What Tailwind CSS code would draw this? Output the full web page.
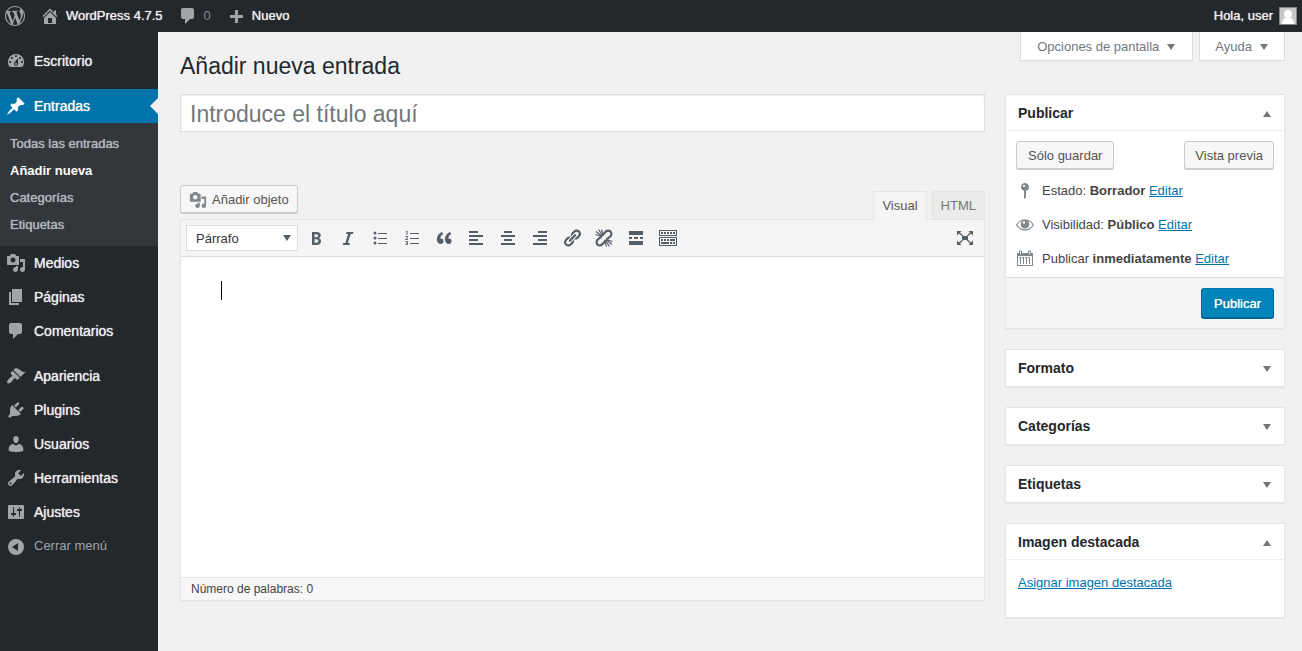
<!DOCTYPE html>
<html lang="es">
<head>
<meta charset="utf-8">
<meta name="viewport" content="width=device-width, initial-scale=1">
<title>Añadir nueva entrada</title>
<script src="https://cdn.jsdelivr.net/npm/@tailwindcss/browser@4"></script>
</head>
<body class="flex min-h-screen flex-col bg-[#f1f1f1] font-['Liberation_Sans',Arial,sans-serif] text-[13px] leading-5 text-[#444]">

<svg class="hidden" aria-hidden="true">
  <symbol id="media" viewBox="0 0 20 20"><path d="M13 11V4c0-.55-.45-1-1-1h-1.670L9 1H5L3.670 3H2c-.55 0-1 .45-1 1v7c0 .55.45 1 1 1h10c.55 0 1-.45 1-1zM7 4.500c1.380 0 2.500 1.120 2.500 2.500S8.380 9.500 7 9.500 4.500 8.380 4.500 7 5.620 4.500 7 4.500zM14 6h5v10.500c0 1.380-1.120 2.500-2.500 2.500S14 17.880 14 16.500s1.120-2.500 2.500-2.500c.17 0 .34.02.5.05V9h-3V6zm-4 8.050V13h2v3.500c0 1.380-1.120 2.500-2.500 2.500S7 17.880 7 16.500 8.120 14 9.500 14c.17 0 .34.02.5.05z"/></symbol>
  <symbol id="comment" viewBox="0 0 20 20"><path d="M5 2h9c1.100 0 2 .9 2 2v7c0 1.100-.9 2-2 2h-2l-5 5v-5H5c-1.100 0-2-.9-2-2V4c0-1.100.9-2 2-2z"/></symbol>
  <symbol id="down" viewBox="0 0 10 10"><path d="M1 2h8L5 8z"/></symbol>
  <symbol id="down-low" viewBox="0 0 10 10"><path d="M1 3h8L5 9z"/></symbol>
  <symbol id="up" viewBox="0 0 10 10"><path d="M1 9h8L5 3z"/></symbol>
</svg>

<header class="flex h-8 items-center justify-between bg-[#23282d] pr-[5px] pl-[5px] text-[#eee] [text-shadow:0_0_1px_#eee]">
  <nav class="flex items-center" aria-label="Barra de herramientas">
    <a href="#" aria-label="Acerca de WordPress" class="mr-[15px] text-[#a0a5aa]">
      <svg class="size-5 fill-current" viewBox="0 0 20 20"><path d="M20 10c0-5.510-4.490-10-10-10C4.480 0 0 4.490 0 10c0 5.520 4.480 10 10 10 5.510 0 10-4.480 10-10zM7.780 15.370L4.370 6.220c.55-.02 1.170-.08 1.170-.08.5-.06.44-1.130-.06-1.110 0 0-1.450.11-2.370.11-.18 0-.37 0-.58-.01C4.120 2.690 6.870 1.110 10 1.110c2.330 0 4.450.87 6.050 2.340-.68-.11-1.650.39-1.650 1.580 0 .74.45 1.360.9 2.100.35.61.55 1.360.55 2.460 0 1.490-1.400 5-1.400 5l-3.030-8.370c.54-.02.82-.17.82-.17.5-.05.44-1.250-.06-1.220 0 0-1.440.12-2.380.12-.87 0-2.330-.12-2.330-.12-.5-.03-.56 1.200-.06 1.220l.92.08 1.260 3.410zM17.410 10c.24-.64.74-1.870.43-4.250.7 1.290 1.050 2.710 1.050 4.250 0 3.290-1.730 6.240-4.400 7.780.97-2.590 1.940-5.200 2.920-7.780zM6.100 18.090C3.120 16.650 1.110 13.530 1.110 10c0-1.300.23-2.480.72-3.590C3.250 10.300 4.670 14.200 6.100 18.090zm4.030-6.630l2.580 6.980c-.86.29-1.760.45-2.710.45-.79 0-1.570-.11-2.290-.33.81-2.380 1.620-4.740 2.420-7.100z"/></svg>
    </a>
    <a href="#" class="mr-[15px] flex items-center gap-[6px]">
      <svg class="size-5 fill-[#a0a5aa]" viewBox="0 0 20 20"><path d="M16 8.500l1.530 1.530-1.060 1.060L10 4.600l-6.470 6.490-1.060-1.060L10 2.500l4 4v-2h2v4zm-6-2.460l6 5.990V18H4v-5.970zM12 17v-5H8v5h4z"/></svg>
      WordPress 4.7.5
    </a>
    <a href="#" class="mr-[15px] flex items-center gap-[6px] text-[#a0a5aa]/80 [text-shadow:none]" aria-label="0 comentarios">
      <svg class="size-5 fill-[#a0a5aa]"><use href="#comment"/></svg>
      0
    </a>
    <a href="#" class="flex items-center gap-[6px]">
      <svg class="size-5 fill-[#a0a5aa]" viewBox="0 0 20 20"><path d="M17 9v3h-5v5H9v-5H4V9h5V4h3v5z"/></svg>
      Nuevo
    </a>
  </nav>
  <a href="#" class="flex items-center gap-[6px]">
    Hola, user
    <svg class="size-[18px]" viewBox="0 0 18 18"><path fill="#82878c" d="M0 0h18v18H0z"/><path fill="#c8c8c8" d="M1 1h16v16H1z"/><circle cx="9" cy="7" r="4" fill="#fff"/><path fill="#fff" d="M3 17c0-4 2-6 4-6h4c2 0 4 2 4 6z"/></svg>
  </a>
</header>

<div class="flex flex-1">
  <nav class="w-[158px] shrink-0 bg-[#23282d] pt-3 text-sm text-[#eee] [text-shadow:0_0_1px_#eee]" aria-label="Menú principal">
    <ul>
      <li><a href="#" class="flex h-[34px] items-center gap-2 pl-[6px]"><svg class="size-5 fill-[#a0a5aa]" viewBox="0 0 20 20"><path d="M3.760 16h12.480A7.998 7.998 0 0 0 10 3a7.998 7.998 0 0 0-6.240 13zM10 4c.55 0 1 .45 1 1s-.45 1-1 1-1-.45-1-1 .45-1 1-1zM6 6c.55 0 1 .45 1 1s-.45 1-1 1-1-.45-1-1 .45-1 1-1zm8 0c.55 0 1 .45 1 1s-.45 1-1 1-1-.45-1-1 .45-1 1-1zm-5.370 5.550L12 7v6c0 1.100-.9 2-2 2s-2-.9-2-2c0-.57.24-1.080.63-1.450zM4 10c.55 0 1 .45 1 1s-.45 1-1 1-1-.45-1-1 .45-1 1-1zm12 0c.55 0 1 .45 1 1s-.45 1-1 1-1-.45-1-1 .45-1 1-1zm-5 3c0-.55-.45-1-1-1s-1 .45-1 1 .45 1 1 1 1-.45 1-1z"/></svg>Escritorio</a></li>
      <li class="mt-[11px]">
        <a href="#" aria-current="true" class="flex h-[34px] items-center gap-2 bg-[#0073aa] pl-[6px] text-white"><svg class="size-5 fill-white" viewBox="0 0 20 20"><path d="M10.440 3.020l1.820-1.820 6.360 6.350-1.830 1.820c-1.050-.68-2.480-.57-3.410.36l-.75.75c-.92.93-1.040 2.350-.35 3.410l-1.830 1.820-2.410-2.410-2.800 2.790c-.42.42-3.380 2.710-3.800 2.290s1.860-3.390 2.280-3.810l2.790-2.790L4.100 9.360l1.830-1.820c1.050.69 2.480.57 3.400-.36l.75-.75c.93-.92 1.050-2.350.36-3.410z"/></svg>Entradas<svg class="ml-auto h-4 w-2 fill-[#f1f1f1]" viewBox="0 0 8 16"><path d="M8 0v16L0 8z"/></svg></a>
        <ul class="bg-[#32373c] pt-2 pb-[7px] text-[13px] text-[#b4b9be] [text-shadow:0_0_1px_#b4b9be]">
          <li><a href="#" class="flex h-[27px] items-center px-[10px]">Todas las entradas</a></li>
          <li><a href="#" class="flex h-[27px] items-center px-[10px] font-bold text-white [text-shadow:none]" aria-current="page">Añadir nueva</a></li>
          <li><a href="#" class="flex h-[27px] items-center px-[10px]">Categorías</a></li>
          <li><a href="#" class="flex h-[27px] items-center px-[10px]">Etiquetas</a></li>
        </ul>
      </li>
      <li><a href="#" class="flex h-[34px] items-center gap-2 pl-[6px]"><svg class="size-5 fill-[#a0a5aa]"><use href="#media"/></svg>Medios</a></li>
      <li><a href="#" class="flex h-[34px] items-center gap-2 pl-[6px]"><svg class="size-5 fill-[#a0a5aa]" viewBox="0 0 20 20"><path d="M6 15V2h10v13H6zm-1 1h8v2H3V5h2v11z"/></svg>Páginas</a></li>
      <li><a href="#" class="flex h-[34px] items-center gap-2 pl-[6px]"><svg class="size-5 fill-[#a0a5aa]"><use href="#comment"/></svg>Comentarios</a></li>
      <li class="mt-[11px]"><a href="#" class="flex h-[34px] items-center gap-2 pl-[6px]"><svg class="size-5 fill-[#a0a5aa]" viewBox="0 0 20 20"><path d="M14.480 11.060L7.410 3.990l1.500-1.500c.5-.56 2.300-.47 3.510.32 1.210.8 1.430 1.280 2.910 2.100 1.180.64 2.450 1.260 4.450.85zm-.71.71L6.700 4.700 4.930 6.470c-.39.39-.39 1.020 0 1.410l1.060 1.060c.39.39.39 1.030 0 1.420-.6.6-1.430 1.110-2.210 1.690-.35.26-.7.53-1.010.84C1.430 14.230.4 16.080 1.400 17.070c.99 1 2.840-.03 4.180-1.360.31-.31.58-.66.85-1.020.57-.78 1.080-1.610 1.690-2.210.39-.39 1.020-.39 1.410 0l1.060 1.060c.39.39 1.020.39 1.410 0z"/></svg>Apariencia</a></li>
      <li><a href="#" class="flex h-[34px] items-center gap-2 pl-[6px]"><svg class="size-5 fill-[#a0a5aa]" viewBox="0 0 20 20"><path d="M13.110 4.360L9.870 7.600 8 5.730l3.240-3.240c.35-.34 1.050-.2 1.560.32.52.51.66 1.210.31 1.550zm-8 1.770l.91-1.120 9.010 9.010-1.190.84c-.71.71-2.630 1.160-3.820 1.160H6.140L4.900 17.260c-.59.59-1.540.59-2.120 0-.59-.58-.59-1.530 0-2.120l1.240-1.240v-3.880c0-1.130.4-3.190 1.090-3.890zm7.260 3.970l3.240-3.240c.34-.35 1.040-.21 1.550.31.52.51.66 1.210.31 1.550l-3.240 3.250z"/></svg>Plugins</a></li>
      <li><a href="#" class="flex h-[34px] items-center gap-2 pl-[6px]"><svg class="size-5 fill-[#a0a5aa]" viewBox="0 0 20 20"><path d="M10 9.250c-2.270 0-2.730-3.440-2.730-3.440C7 4.020 7.820 2 9.970 2c2.160 0 2.980 2.020 2.710 3.810 0 0-.41 3.440-2.680 3.440zm0 2.570L12.720 10c2.390 0 4.520 2.330 4.520 4.530v2.490s-3.650 1.130-7.240 1.130c-3.650 0-7.240-1.130-7.240-1.130v-2.490c0-2.250 1.940-4.480 4.470-4.480z"/></svg>Usuarios</a></li>
      <li><a href="#" class="flex h-[34px] items-center gap-2 pl-[6px]"><svg class="size-5 fill-[#a0a5aa]" viewBox="0 0 20 20"><path d="M16.680 9.770c-1.340 1.340-3.300 1.670-4.950.99l-5.410 6.520c-.99.99-2.590.99-3.580 0s-.99-2.590 0-3.570l6.520-5.420c-.68-1.650-.35-3.610.99-4.950 1.280-1.280 3.120-1.620 4.720-1.060l-2.890 2.890 2.820 2.820 2.860-2.870c.53 1.580.18 3.390-1.080 4.650zM3.810 16.210c.4.39 1.040.39 1.430 0 .4-.4.4-1.040 0-1.430-.39-.4-1.030-.4-1.430 0-.39.39-.39 1.030 0 1.430z"/></svg>Herramientas</a></li>
      <li><a href="#" class="flex h-[34px] items-center gap-2 pl-[6px]"><svg class="size-5 fill-[#a0a5aa]" viewBox="0 0 20 20"><path d="M18 16V4c0-.55-.45-1-1-1H3c-.55 0-1 .45-1 1v12c0 .55.45 1 1 1h14c.55 0 1-.45 1-1zM8 11h1c.55 0 1 .45 1 1s-.45 1-1 1H8v1.500c0 .28-.22.5-.5.5s-.5-.22-.5-.5V13H6c-.55 0-1-.45-1-1s.45-1 1-1h1V5.500c0-.28.22-.5.5-.5s.5.22.5.5V11zm5-2h-1c-.55 0-1-.45-1-1s.45-1 1-1h1V5.500c0-.28.22-.5.5-.5s.5.22.5.5V7h1c.55 0 1 .45 1 1s-.45 1-1 1h-1v5.500c0 .28-.22.5-.5.5s-.5-.22-.5-.5V9z"/></svg>Ajustes</a></li>
      <li><button type="button" class="flex h-[35px] w-full items-center gap-2 pl-[6px] text-[13px] text-[#a0a5aa] [text-shadow:none]"><svg class="size-5 fill-current" viewBox="0 0 20 20"><path fill-rule="evenodd" d="M10 2a8 8 0 1 1 0 16 8 8 0 0 1 0-16zm2 4l-6 4 6 4z"/></svg>Cerrar menú</button></li>
    </ul>
  </nav>

  <main class="min-w-0 flex-1 pr-[17px] pl-[22px]">
    <div class="flex h-[62px] items-start justify-between">
      <h1 class="pt-5 text-[23px] leading-7 text-[#23282d]">Añadir nueva entrada</h1>
      <div class="flex gap-[6px] text-[#72777c]">
        <button type="button" class="flex h-[29px] items-center gap-[7px] border border-t-0 border-[#ddd] bg-white px-4 pt-px shadow-[0_1px_1px_-1px_rgba(0,0,0,0.1)]">Opciones de pantalla<svg class="size-[10px] fill-current"><use href="#down"/></svg></button>
        <button type="button" class="flex h-[29px] items-center gap-[7px] border border-t-0 border-[#ddd] bg-white px-[15px] pt-px shadow-[0_1px_1px_-1px_rgba(0,0,0,0.1)]">Ayuda<svg class="size-[10px] fill-current"><use href="#down"/></svg></button>
      </div>
    </div>

    <div class="flex items-start gap-5">
      <section class="min-w-0 flex-1" aria-label="Editor">
        <input type="text" aria-label="Título" placeholder="Introduce el título aquí" class="block h-[38px] w-full border border-[#ddd] bg-white px-[9px] pt-[2px] text-[23px] shadow-[inset_0_1px_2px_rgba(0,0,0,0.07)] placeholder:text-[#72777c]">

        <div class="mt-[53px] flex h-[34px] items-start justify-between">
          <button type="button" class="flex h-7 items-center gap-[5px] rounded-[3px] border border-[#ccc] bg-[#f7f7f7] px-2 pt-px text-[#555] shadow-[0_1px_0_#ccc]"><svg class="size-[18px] fill-[#82878c]"><use href="#media"/></svg>Añadir objeto</button>
          <div class="relative flex items-start gap-[5px] self-end" role="tablist">
            <button type="button" role="tab" aria-selected="true" class="-mb-px h-[29px] border border-b-0 border-[#e5e5e5] bg-[#f5f5f5] px-2 text-[#555]">Visual</button>
            <button type="button" role="tab" aria-selected="false" class="h-7 border border-b-0 border-[#e5e5e5] bg-[#ebebeb] px-2 text-[#72777c]">HTML</button>
          </div>
        </div>

        <div class="border border-[#e5e5e5] bg-white shadow-[0_1px_1px_rgba(0,0,0,0.04)]">
          <div class="flex h-[37px] items-center justify-between border-b border-[#ddd] bg-[#f5f5f5] px-[5px] text-[#555d66]" role="toolbar">
            <div class="flex items-center">
              <label class="relative mr-[2px] block">
                <select aria-label="Formato de párrafo" class="h-[26px] w-28 appearance-none border border-[#ddd] bg-white pt-px pl-[9px] text-[13px] text-[#32373c]"><option>Párrafo</option><option>Título 1</option><option>Título 2</option></select>
                <svg class="pointer-events-none absolute top-2 right-[6px] size-[10px] fill-[#555d66]"><use href="#down"/></svg>
              </label>
              <button type="button" aria-label="Negrita" class="flex w-8 justify-center"><svg class="size-5 fill-current" viewBox="0 0 20 20"><path d="M6 4v13h4.540c1.370 0 2.460-.33 3.260-1 .8-.66 1.200-1.580 1.200-2.770 0-.84-.17-1.510-.51-2.010s-.9-.85-1.670-1.030v-.09c.57-.1 1.020-.4 1.360-.9s.51-1.130.51-1.910c0-1.140-.39-1.980-1.170-2.500C12.750 4.260 11.500 4 9.780 4H6zm2.570 5.150V6.260h1.360c.73 0 1.270.11 1.610.32.34.22.51.58.51 1.070 0 .54-.16.92-.47 1.150s-.82.35-1.510.35h-1.500zm0 2.190h1.600c1.440 0 2.160.53 2.160 1.610 0 .6-.17 1.050-.51 1.340s-.86.43-1.570.43H8.570v-3.380z"/></svg></button>
              <button type="button" aria-label="Cursiva" class="flex w-8 justify-center"><svg class="size-5 fill-current" viewBox="0 0 20 20"><path d="M14.780 6h-2.130l-2.800 9h2.120l-.62 2H4.600l.62-2h2.140l2.800-9H8.030l.62-2h6.750z"/></svg></button>
              <button type="button" aria-label="Lista" class="flex w-8 justify-center"><svg class="size-5 fill-current" viewBox="0 0 20 20"><circle cx="5" cy="5" r="1.500"/><circle cx="5" cy="10" r="1.500"/><circle cx="5" cy="15" r="1.500"/><path d="M8 5h9v1H8zM8 10h9v1H8zM8 15h9v1H8z"/></svg></button>
              <button type="button" aria-label="Lista numerada" class="flex w-8 justify-center"><svg class="size-5 fill-current" viewBox="0 0 20 20"><path d="M8 5h9v1H8zM8 10h9v1H8zM8 15h9v1H8z"/><path fill="none" stroke="currentColor" stroke-width=".9" d="M4 4l1-1v4M3.500 8.500h2v1.500l-2 1.500h2.500M3.500 13.500H5.500v3H3.500M4 15h1.500"/></svg></button>
              <button type="button" aria-label="Cita" class="flex w-8 justify-center"><svg class="size-5 fill-current" viewBox="0 0 20 20"><path d="M9.490 13.220c0-.74-.2-1.380-.61-1.900-.62-.78-1.830-.88-2.530-.72-.29-1.650 1.110-3.750 2.920-4.650L7.880 4c-2.730 1.300-5.420 4.280-4.960 8.050C3.210 14.430 4.590 16 6.540 16c.85 0 1.560-.25 2.120-.75s.83-1.180.83-2.030zm8.050 0c0-.74-.2-1.380-.61-1.900-.63-.78-1.830-.88-2.530-.72-.29-1.650 1.110-3.750 2.920-4.650L15.930 4c-2.730 1.300-5.410 4.280-4.950 8.050.29 2.380 1.660 3.950 3.610 3.950.85 0 1.560-.25 2.120-.75s.83-1.180.83-2.030z"/></svg></button>
              <button type="button" aria-label="Alinear a la izquierda" class="flex w-8 justify-center"><svg class="size-5 fill-current" viewBox="0 0 20 20"><path d="M3 3h9v2H3zM3 7h14v2H3zM3 11h9v2H3zM3 15h14v2H3z"/></svg></button>
              <button type="button" aria-label="Centrar" class="flex w-8 justify-center"><svg class="size-5 fill-current" viewBox="0 0 20 20"><path d="M6 3h8v2H6zM3 7h14v2H3zM6 11h8v2H6zM3 15h14v2H3z"/></svg></button>
              <button type="button" aria-label="Alinear a la derecha" class="flex w-8 justify-center"><svg class="size-5 fill-current" viewBox="0 0 20 20"><path d="M8 3h9v2H8zM3 7h14v2H3zM8 11h9v2H8zM3 15h14v2H3z"/></svg></button>
              <button type="button" aria-label="Insertar enlace" class="flex w-8 justify-center"><svg class="size-5 fill-current" viewBox="0 0 20 20"><path d="M17.740 2.760c1.680 1.690 1.680 4.410 0 6.100l-1.530 1.520c-1.120 1.120-2.700 1.470-4.140 1.090l2.620-2.610.76-.77.76-.76c.84-.84.84-2.200 0-3.040-.84-.85-2.200-.85-3.040 0l-.77.76-3.380 3.380c-.37-1.440-.02-3.020 1.100-4.140l1.520-1.530c1.690-1.680 4.420-1.680 6.100 0zM8.590 13.430l5.340-5.340c.42-.42.42-1.100 0-1.520-.44-.43-1.130-.39-1.530 0l-5.330 5.340c-.42.42-.42 1.100 0 1.520.44.43 1.130.39 1.520 0zm-.76 2.290l4.140-4.150c.38 1.440.03 3.020-1.090 4.140l-1.520 1.530c-1.690 1.680-4.410 1.680-6.100 0-1.680-1.680-1.680-4.420 0-6.100l1.530-1.520c1.120-1.120 2.700-1.470 4.140-1.100l-4.140 4.150c-.85.84-.85 2.200 0 3.050.84.84 2.200.84 3.040 0z"/></svg></button>
              <button type="button" aria-label="Quitar enlace" class="flex w-8 justify-center"><svg class="size-5" viewBox="0 0 20 20" fill="none" stroke="currentColor"><path stroke-width="2.200" d="M9 7.500c.1-1 .6-1.700 1.200-2.300l1.600-1.600c1.300-1.300 3.500-1.300 4.700-.1s1.200 3.400-.1 4.700l-1.600 1.600c-.7.7-1.600 1-2.600 1M11 12.500c-.1 1-.6 1.700-1.200 2.300l-1.600 1.600c-1.300 1.300-3.500 1.300-4.700.1s-1.200-3.400.1-4.700l1.600-1.600c.7-.7 1.600-1 2.600-1"/><path stroke-width="1.200" d="M1.500 6.500L8 8.500M2 3.500l6.500 5M4.500 1.500L9 8M7.500 1.500l2 6M18.500 13.500L12 11.500M18 16.500l-6.500-5M15.500 18.500L11 12M12.500 18.500l-2-6"/></svg></button>
              <button type="button" aria-label="Insertar etiqueta Leer más" class="flex w-8 justify-center"><svg class="size-5 fill-current" viewBox="0 0 20 20"><path d="M3 3h14v4H3zM3 9h3v2H3zM8 9h4v2H8zM14 9h3v2h-3zM3 13h14v4H3z"/></svg></button>
              <button type="button" aria-label="Mostrar más botones" class="flex w-8 justify-center"><svg class="size-5 fill-current" viewBox="0 0 20 20"><path fill-rule="evenodd" d="M1 2h18v6H1zm1 1v4h16V3zM1 9h18v9H1zm1 1v7h16v-7z"/><path d="M3 4h2v2H3zM6 4h2v2H6zM9 4h2v2H9zM12 4h2v2h-2zM15 4h2v2h-2zM3 11h2v2H3zM6 11h2v2H6zM9 11h2v2H9zM12 11h5v2h-5zM3 14h8v2H3zM12 14h2v2h-2zM15 14h2v2h-2z"/></svg></button>
            </div>
            <button type="button" aria-label="Modo sin distracciones" class="mr-1 flex h-5 w-5"><svg class="size-5 fill-current" viewBox="0 0 20 20"><path d="M7 8h6v4H7zM2 3h4.500L5 4.500l3.300 3.200-.9.9L4 5.500 2 7.500zM18 3h-4.500L15 4.500l-3.300 3.200.9.9L16 5.500l2 2zM2 17h4.500L5 15.500l3.300-3.200-.9-.9L4 14.500l-2-2zM18 17h-4.500l1.500-1.500-3.300-3.200.9-.9 3.400 3.100 2-2z"/></svg></button>
          </div>
          <div role="textbox" aria-multiline="true" aria-label="Contenido" contenteditable="true" class="min-h-80 px-10 pt-6 outline-none"><span class="block h-[19px] w-px bg-black"></span></div>
          <div class="border-t border-[#e5e5e5] bg-[#f7f7f7] px-[10px] pt-px pb-px text-xs leading-5">Número de palabras: 0</div>
        </div>
      </section>

      <aside class="flex w-[280px] shrink-0 flex-col gap-5" aria-label="Opciones de la entrada">
        <section class="border border-[#e5e5e5] bg-white shadow-[0_1px_1px_rgba(0,0,0,0.04)]">
          <div class="flex h-9 items-center justify-between border-b border-[#eee] px-3">
            <h2 class="text-sm font-bold text-[#23282d]">Publicar</h2>
            <button type="button" aria-label="Plegar Publicar"><svg class="size-[10px] fill-[#72777c]"><use href="#up"/></svg></button>
          </div>
          <div class="flex justify-between px-[10px] pt-[10px]">
            <button type="button" class="h-7 rounded-[3px] border border-[#ccc] bg-[#f7f7f7] px-[11px] pt-px text-[#555] shadow-[0_1px_0_#ccc]">Sólo guardar</button>
            <button type="button" class="h-7 rounded-[3px] border border-[#ccc] bg-[#f7f7f7] px-[10px] pt-px text-[#555] shadow-[0_1px_0_#ccc]">Vista previa</button>
          </div>
          <ul class="px-[9px] pt-[5px] pb-[1px]">
            <li class="flex h-[34px] items-center gap-[7px]"><svg class="size-5 fill-[#82878c]" viewBox="0 0 20 20"><path d="M14 6c0 1.860-1.280 3.410-3 3.860V16c0 1-2 2-2 2V9.860c-1.720-.45-3-2-3-3.860 0-2.210 1.790-4 4-4s4 1.790 4 4zM8 5c0 .55.45 1 1 1s1-.45 1-1-.45-1-1-1-1 .45-1 1z"/></svg><p>Estado: <b>Borrador</b> <a href="#" class="text-[#0073aa] underline">Editar</a></p></li>
            <li class="flex h-[34px] items-center gap-[7px]"><svg class="size-5 fill-[#82878c]" viewBox="0 0 20 20"><path fill-rule="evenodd" d="M10 4.500c4 0 7 2 9 5.500-2 3.500-5 5.500-9 5.500S3 13.500 1 10c2-3.500 5-5.500 9-5.500zM2.300 10c2 3 4.500 4.300 7.700 4.300s5.700-1.300 7.700-4.300C16.500 8 15 6.800 13 6.100a4.700 4.700 0 0 1 1.300 3.200 4.300 4.300 0 0 1-8.600 0A4.700 4.700 0 0 1 7 6.100C5 6.800 3.500 8 2.300 10zM9 6.200a1.300 1.300 0 1 0 0 2.600 1.300 1.300 0 0 0 0-2.600z"/></svg><p>Visibilidad: <b>Público</b> <a href="#" class="text-[#0073aa] underline">Editar</a></p></li>
            <li class="flex h-[34px] items-center gap-[7px]"><svg class="size-5 fill-[#82878c]" viewBox="0 0 20 20"><path fill-rule="evenodd" d="M2 4h2V2.500a1 1 0 0 1 1-1h1a1 1 0 0 1 1 1V4h6V2.500a1 1 0 0 1 1-1h1a1 1 0 0 1 1 1V4h2v13H2zm3-1.500V5h1V2.500zm9 0V5h1V2.500zM3 7v9h14V7z"/><path d="M4 8h2v7H5V9H4zM7 8h2v7H8V9H7zM10 8h2v7h-1V9h-1zM13 8h2v7h-1V9h-1z"/><path d="M5 8h1v7H5zM8 8h1v7H8zM11 8h1v7h-1zM14 8h1v7h-1z"/></svg><p>Publicar <b>inmediatamente</b> <a href="#" class="text-[#0073aa] underline">Editar</a></p></li>
          </ul>
          <div class="flex justify-end border-t border-[#ddd] bg-[#f5f5f5] p-[10px]">
            <button type="button" class="h-[30px] rounded-[3px] border border-[#006799] border-t-[#0073aa] bg-[#0085ba] px-3 pt-px text-white shadow-[0_1px_0_#006799] [text-shadow:0_0_1px_#fff,0_-1px_1px_#006799]">Publicar</button>
          </div>
        </section>

        <section class="flex h-[38px] items-center justify-between border border-[#e5e5e5] bg-white px-3 shadow-[0_1px_1px_rgba(0,0,0,0.04)]">
          <h2 class="text-sm font-bold text-[#23282d]">Formato</h2>
          <button type="button" aria-label="Desplegar Formato"><svg class="size-[10px] fill-[#72777c]"><use href="#down-low"/></svg></button>
        </section>
        <section class="flex h-[38px] items-center justify-between border border-[#e5e5e5] bg-white px-3 shadow-[0_1px_1px_rgba(0,0,0,0.04)]">
          <h2 class="text-sm font-bold text-[#23282d]">Categorías</h2>
          <button type="button" aria-label="Desplegar Categorías"><svg class="size-[10px] fill-[#72777c]"><use href="#down-low"/></svg></button>
        </section>
        <section class="flex h-[38px] items-center justify-between border border-[#e5e5e5] bg-white px-3 shadow-[0_1px_1px_rgba(0,0,0,0.04)]">
          <h2 class="text-sm font-bold text-[#23282d]">Etiquetas</h2>
          <button type="button" aria-label="Desplegar Etiquetas"><svg class="size-[10px] fill-[#72777c]"><use href="#down-low"/></svg></button>
        </section>

        <section class="border border-[#e5e5e5] bg-white shadow-[0_1px_1px_rgba(0,0,0,0.04)]">
          <div class="flex h-9 items-center justify-between border-b border-[#eee] px-3">
            <h2 class="text-sm font-bold text-[#23282d]">Imagen destacada</h2>
            <button type="button" aria-label="Plegar Imagen destacada"><svg class="size-[10px] fill-[#72777c]"><use href="#up"/></svg></button>
          </div>
          <p class="px-3 pt-[13px] pb-6"><a href="#" class="text-[#0073aa] underline">Asignar imagen destacada</a></p>
        </section>
      </aside>
    </div>
  </main>
</div>
</body>
</html>
